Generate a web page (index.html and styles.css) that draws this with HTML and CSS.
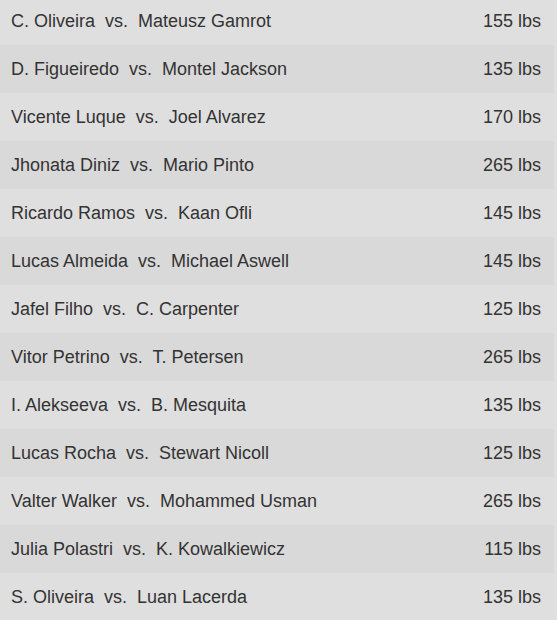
FILE: index.html
```html
<!DOCTYPE html>
<html>
<head>
<meta charset="utf-8">
<link rel="stylesheet" href="styles.css">
</head>
<body>
<div class="list">
  <div class="row"><span class="fight">C. Oliveira  vs.  Mateusz Gamrot</span><span class="weight">155 lbs</span></div>
  <div class="row"><span class="fight">D. Figueiredo  vs.  Montel Jackson</span><span class="weight">135 lbs</span></div>
  <div class="row"><span class="fight">Vicente Luque  vs.  Joel Alvarez</span><span class="weight">170 lbs</span></div>
  <div class="row"><span class="fight">Jhonata Diniz  vs.  Mario Pinto</span><span class="weight">265 lbs</span></div>
  <div class="row"><span class="fight">Ricardo Ramos  vs.  Kaan Ofli</span><span class="weight">145 lbs</span></div>
  <div class="row"><span class="fight">Lucas Almeida  vs.  Michael Aswell</span><span class="weight">145 lbs</span></div>
  <div class="row"><span class="fight">Jafel Filho  vs.  C. Carpenter</span><span class="weight">125 lbs</span></div>
  <div class="row"><span class="fight">Vitor Petrino  vs.  T. Petersen</span><span class="weight">265 lbs</span></div>
  <div class="row"><span class="fight">I. Alekseeva  vs.  B. Mesquita</span><span class="weight">135 lbs</span></div>
  <div class="row"><span class="fight">Lucas Rocha  vs.  Stewart Nicoll</span><span class="weight">125 lbs</span></div>
  <div class="row"><span class="fight">Valter Walker  vs.  Mohammed Usman</span><span class="weight">265 lbs</span></div>
  <div class="row"><span class="fight">Julia Polastri  vs.  K. Kowalkiewicz</span><span class="weight">115 lbs</span></div>
  <div class="row"><span class="fight">S. Oliveira  vs.  Luan Lacerda</span><span class="weight">135 lbs</span></div>
</div>
</body>
</html>
```
FILE: styles.css
```css
html, body {
  margin: 0;
  padding: 0;
  background: #e0e0e0;
  overflow: hidden;
}
.list {
  width: 554px;
  margin-top: -3px;
  display: flex;
  flex-direction: column;
}
.row {
  height: 48px;
  display: flex;
  align-items: center;
  justify-content: space-between;
  padding: 0 13px 0 11px;
  font-family: "Liberation Sans", Arial, sans-serif;
  font-size: 18px;
  color: #333333;
  background: #dfdfdf;
}
.row:nth-child(even) {
  background: #d9d9d9;
}
.fight {
  white-space: pre;
}
.weight {
  white-space: pre;
}
```
